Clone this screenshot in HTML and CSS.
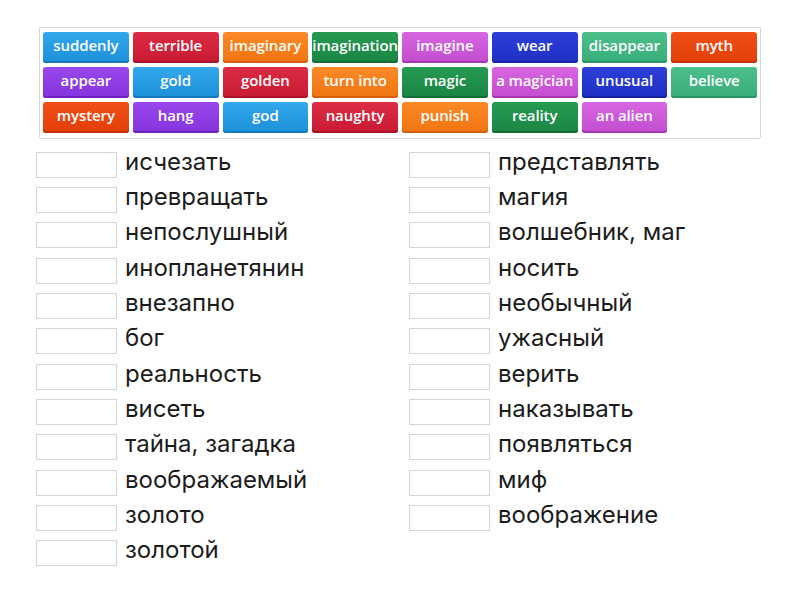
FILE: index.html
```html
<!DOCTYPE html>
<html lang="ru">
<head>
<meta charset="utf-8">
<title>Match up</title>
<link rel="stylesheet" href="styles.css">
</head>
<body>
<div class="bank">
  <div class="tile c-blue">suddenly</div>
  <div class="tile c-red">terrible</div>
  <div class="tile c-orange">imaginary</div>
  <div class="tile c-green">imagination</div>
  <div class="tile c-pink">imagine</div>
  <div class="tile c-navy">wear</div>
  <div class="tile c-teal">disappear</div>
  <div class="tile c-vermil">myth</div>

  <div class="tile c-purple">appear</div>
  <div class="tile c-blue">gold</div>
  <div class="tile c-red">golden</div>
  <div class="tile c-orange">turn into</div>
  <div class="tile c-green">magic</div>
  <div class="tile c-pink">a magician</div>
  <div class="tile c-navy">unusual</div>
  <div class="tile c-teal">believe</div>

  <div class="tile c-vermil">mystery</div>
  <div class="tile c-purple">hang</div>
  <div class="tile c-blue">god</div>
  <div class="tile c-red">naughty</div>
  <div class="tile c-orange">punish</div>
  <div class="tile c-green">reality</div>
  <div class="tile c-pink">an alien</div>
</div>

<div class="lists">
  <div class="col">
    <div class="row"><span class="slot"></span><span class="word">исчезать</span></div>
    <div class="row"><span class="slot"></span><span class="word">превращать</span></div>
    <div class="row"><span class="slot"></span><span class="word">непослушный</span></div>
    <div class="row"><span class="slot"></span><span class="word">инопланетянин</span></div>
    <div class="row"><span class="slot"></span><span class="word">внезапно</span></div>
    <div class="row"><span class="slot"></span><span class="word">бог</span></div>
    <div class="row"><span class="slot"></span><span class="word">реальность</span></div>
    <div class="row"><span class="slot"></span><span class="word">висеть</span></div>
    <div class="row"><span class="slot"></span><span class="word">тайна, загадка</span></div>
    <div class="row"><span class="slot"></span><span class="word">воображаемый</span></div>
    <div class="row"><span class="slot"></span><span class="word">золото</span></div>
    <div class="row"><span class="slot"></span><span class="word">золотой</span></div>
  </div>
  <div class="col">
    <div class="row"><span class="slot"></span><span class="word">представлять</span></div>
    <div class="row"><span class="slot"></span><span class="word">магия</span></div>
    <div class="row"><span class="slot"></span><span class="word">волшебник, маг</span></div>
    <div class="row"><span class="slot"></span><span class="word">носить</span></div>
    <div class="row"><span class="slot"></span><span class="word">необычный</span></div>
    <div class="row"><span class="slot"></span><span class="word">ужасный</span></div>
    <div class="row"><span class="slot"></span><span class="word">верить</span></div>
    <div class="row"><span class="slot"></span><span class="word">наказывать</span></div>
    <div class="row"><span class="slot"></span><span class="word">появляться</span></div>
    <div class="row"><span class="slot"></span><span class="word">миф</span></div>
    <div class="row"><span class="slot"></span><span class="word">воображение</span></div>
  </div>
</div>
</body>
</html>
```

FILE: styles.css
```css
html, body {
  margin: 0;
  padding: 0;
  background: #ffffff;
}

body {
  font-family: Inter, "Noto Sans", sans-serif;
}

.bank {
  box-sizing: border-box;
  margin: 27px 0 0 39px;
  width: 722px;
  height: 112px;
  border: 1px solid #d6d6d6;
  border-radius: 2px;
  padding: 4px 3px 5px 3px;
  display: grid;
  grid-template-columns: repeat(8, 1fr);
  grid-auto-rows: 31px;
  gap: 4px 4px;
}

.tile {
  border-radius: 3px;
  color: #ffffff;
  font-family: "Open Sans", Lato, sans-serif;
  font-weight: 600;
  font-size: 15px;
  letter-spacing: -0.1px;
  display: flex;
  align-items: center;
  justify-content: center;
  white-space: nowrap;
  overflow: hidden;
  padding-bottom: 5px;
  box-sizing: border-box;
}

.c-blue   { background: linear-gradient(#34a8ec, #1b8fd8); box-shadow: inset 0 -2px 0 #1579bd; }
.c-red    { background: linear-gradient(#dc2c44, #c81a33); box-shadow: inset 0 -2px 0 #a9132a; }
.c-orange { background: linear-gradient(#fb8a26, #f07412); box-shadow: inset 0 -2px 0 #d5600a; }
.c-green  { background: linear-gradient(#269a52, #1a8543); box-shadow: inset 0 -2px 0 #116d34; }
.c-pink   { background: linear-gradient(#d766e0, #c24dd0); box-shadow: inset 0 -2px 0 #a636b4; }
.c-navy   { background: linear-gradient(#2c3fd8, #1f2fc4); box-shadow: inset 0 -2px 0 #1623a2; }
.c-teal   { background: linear-gradient(#4cbf8c, #38ad79); box-shadow: inset 0 -2px 0 #289463; }
.c-vermil { background: linear-gradient(#f24f18, #e23e08); box-shadow: inset 0 -2px 0 #c33104; }
.c-purple { background: linear-gradient(#9848ec, #8533dd); box-shadow: inset 0 -2px 0 #6d22c0; }

.lists {
  display: flex;
  margin: 8px 0 0 36px;
}

.col {
  width: 373px;
  display: flex;
  flex-direction: column;
}

.row {
  height: 35.33px;
  display: flex;
  align-items: center;
}

.slot {
  box-sizing: border-box;
  width: 81px;
  height: 26px;
  border: 1px solid #d4d4d4;
  background: #ffffff;
  flex: none;
}

.word {
  margin-left: 8px;
  font-size: 24px;
  color: #1c1c1c;
  line-height: 1;
  padding-bottom: 6px;
  white-space: nowrap;
}
```
